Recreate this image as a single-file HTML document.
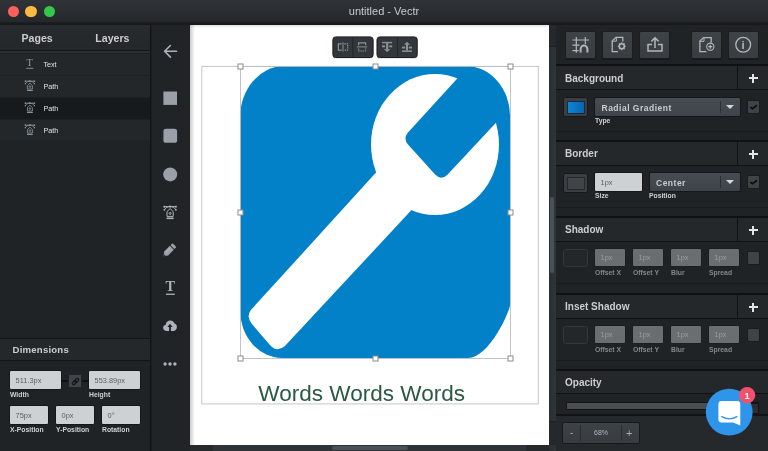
<!DOCTYPE html>
<html lang="en">
<head>
<meta charset="utf-8">
<title>untitled - Vectr</title>
<style>
*{box-sizing:border-box;margin:0;padding:0}
html,body{width:768px;height:451px;overflow:hidden;background:#1f2326;font-family:"Liberation Sans",sans-serif;}
#app{position:relative;width:768px;height:451px;overflow:hidden;will-change:transform}
.abs{position:absolute}
/* title bar */
#titlebar{left:0;top:0;width:768px;height:25px;z-index:5;background:linear-gradient(#303438,#25282b 21.8px,#1a1c1e 22.6px,#17191b 25px);}
#titlebar .t{position:absolute;left:0;width:768px;top:5px;text-align:center;font-size:11px;line-height:13px;color:#c9c9c9;}
.tl{position:absolute;top:5.8px;width:11.4px;height:11.4px;border-radius:50%}
/* left panel */
#left{left:0;top:24px;width:150px;height:427px;background:#1f2326}
#lhead{left:0;top:0;width:150px;height:26.4px;background:linear-gradient(#272b2e,#24282b)}
.htxt{position:absolute;font-weight:bold;font-size:10px;letter-spacing:0;color:#cdcdcd;line-height:12px;white-space:nowrap}
.row{position:absolute;left:0;width:150px;height:22px;background:#23272a;border-top:1px solid #1d2023}
.row .lbl{position:absolute;left:43.4px;top:6px;font-size:7.2px;line-height:9px;color:#e2e2e2}
.row svg{position:absolute;left:22px;top:3px}
.row.sel{background:#171a1c}
.inp{position:absolute;height:19px;background:#cdd1d4;border:1px solid #15181a;border-radius:2px;font-size:7.4px;line-height:19px;color:#5b5f64;padding-left:5.6px;white-space:nowrap}
.inp.dis{background:#6b6e71;color:#9a9da0;border-color:#1c1f21;line-height:17px}
.sl{position:absolute;font-size:6.8px;font-weight:bold;letter-spacing:0;color:#d0d0d0;line-height:8px;white-space:nowrap}
.sl.dim{color:#84888c}
/* tool strip */
#tools{left:150px;top:24px;width:40px;height:427px;background:#202427;border-left:1px solid #111315;box-shadow:inset 1px 0 0 #1b1e20}
/* canvas */
#canvas{left:190px;top:24px;width:359px;height:421px;background:#fff}
/* right */
#right{left:555px;top:24px;width:213px;height:427px;background:#1f2326}
#right:after{content:"";position:absolute;left:0;top:0;width:1px;height:427px;background:#131517}
.sec{position:absolute;left:0;width:213px;height:26px;background:#24282b;border-top:2px solid #0f1112;border-bottom:1px solid #0f1112}
.sec .htxt{left:10px;top:7px}
.sec .plus{position:absolute;left:182px;top:0;width:31px;height:23px;border-left:1px solid #0f1112}
.sec .plus:before{content:"";position:absolute;left:10.6px;top:11.2px;width:9.4px;height:2px;background:#e4e4e4}
.sec .plus:after{content:"";position:absolute;left:14.3px;top:7.5px;width:2px;height:9.4px;background:#e4e4e4}
.sub{position:absolute;left:0;width:213px;height:1px;background:#191c1e}
.sw{position:absolute;left:8px;width:25px;height:20px;background:#3a3f43;border:1px solid #15181a;border-radius:2.5px}
.sw i{position:absolute;left:3px;top:2.5px;right:2.5px;bottom:2.5px;background:#40454a;border:1px solid #26292c}
.dd{position:absolute;height:20px;background:linear-gradient(#464c51,#3e4449);border:1px solid #15181a;border-radius:2px;font-weight:bold;font-size:8.5px;letter-spacing:.5px;color:#c9ccce;line-height:19px;padding-top:1px;padding-left:6.5px;white-space:nowrap}
.dd:before{content:"";position:absolute;right:19px;top:3px;width:1px;height:12px;background:#2d3033}
.dd:after{content:"";position:absolute;right:6px;top:7px;border:4px solid transparent;border-top:4px solid #d5d7d9;border-bottom:0}
.cb{position:absolute;left:192px;width:13px;height:14px;background:#3f4347;border:1px solid #191c1e;border-radius:2px}
.cb svg{position:absolute;left:-1px;top:-1px}
.sw.dk{background:#24272a;border-color:#33373a;height:18px}
.tb{position:absolute;top:7px;width:31px;height:28px;background:linear-gradient(#3e4347,#393d41);border:1px solid #1b1d1f;border-radius:2px;box-shadow:0 1px 0 #17191b}
</style>
</head>
<body>
<div id="app">

<!-- TITLE BAR -->
<div id="titlebar" class="abs">
  <span class="tl" style="left:7.5px;background:#fc605c"></span>
  <span class="tl" style="left:25.3px;background:#fdbc40"></span>
  <span class="tl" style="left:43.8px;background:#34c84a"></span>
  <div class="t">untitled - Vectr</div>
</div>

<!-- LEFT PANEL -->
<div id="left" class="abs">
  <div id="lhead" class="abs">
    <span class="htxt" style="left:21.5px;top:8px;font-size:10.6px;line-height:13px">Pages</span>
    <span class="htxt" style="left:95.3px;top:8px;font-size:10.6px;line-height:13px">Layers</span>
  </div>
  <div class="abs" style="left:0;top:26.4px;width:150px;height:3px;background:linear-gradient(#131517 1.2px,#2a2f32 1.4px)"></div>
  <div class="row" style="top:29px"><svg width="16" height="16" viewBox="22 57 16 16"><g fill="none" stroke="#8c99a4" stroke-width=".9"><path d="M26.3 68.3H33.3"/><text x="29.8" y="65.9" text-anchor="middle" font-family="'Liberation Serif',serif" font-size="10.4" fill="#8c99a4" stroke="none">T</text></g></svg><span class="lbl">Text</span></div>
  <div class="row" style="top:51px"><svg width="16" height="16" viewBox="22 79 16 16"><g fill="none" stroke="#8c99a4" stroke-width=".8"><path d="M25.6 81.2H34.2M25.4 83.6C26.6 81.8 28.2 81.2 29.9 81.2C31.6 81.2 33.2 81.8 34.4 83.6"/><path d="M29.9 83.2L32.4 85.6V89H27.4V85.6Z"/><path d="M27 90.4H32.8" stroke-width="1.1"/><circle cx="29.9" cy="86.6" r=".8"/></g><g fill="#8c99a4"><rect x="24.7" y="80.5" width="1.4" height="1.4"/><rect x="33.7" y="80.5" width="1.4" height="1.4"/><rect x="29.2" y="80.4" width="1.4" height="1.4"/><rect x="24.8" y="83.1" width="1.2" height="1.2"/><rect x="33.8" y="83.1" width="1.2" height="1.2"/></g></svg><span class="lbl">Path</span></div>
  <div class="row sel" style="top:73px"><svg width="16" height="16" viewBox="22 79 16 16"><g fill="none" stroke="#8c99a4" stroke-width=".8"><path d="M25.6 81.2H34.2M25.4 83.6C26.6 81.8 28.2 81.2 29.9 81.2C31.6 81.2 33.2 81.8 34.4 83.6"/><path d="M29.9 83.2L32.4 85.6V89H27.4V85.6Z"/><path d="M27 90.4H32.8" stroke-width="1.1"/><circle cx="29.9" cy="86.6" r=".8"/></g><g fill="#8c99a4"><rect x="24.7" y="80.5" width="1.4" height="1.4"/><rect x="33.7" y="80.5" width="1.4" height="1.4"/><rect x="29.2" y="80.4" width="1.4" height="1.4"/><rect x="24.8" y="83.1" width="1.2" height="1.2"/><rect x="33.8" y="83.1" width="1.2" height="1.2"/></g></svg><span class="lbl">Path</span></div>
  <div class="row" style="top:95px;height:21px"><svg width="16" height="16" viewBox="22 79 16 16"><g fill="none" stroke="#8c99a4" stroke-width=".8"><path d="M25.6 81.2H34.2M25.4 83.6C26.6 81.8 28.2 81.2 29.9 81.2C31.6 81.2 33.2 81.8 34.4 83.6"/><path d="M29.9 83.2L32.4 85.6V89H27.4V85.6Z"/><path d="M27 90.4H32.8" stroke-width="1.1"/><circle cx="29.9" cy="86.6" r=".8"/></g><g fill="#8c99a4"><rect x="24.7" y="80.5" width="1.4" height="1.4"/><rect x="33.7" y="80.5" width="1.4" height="1.4"/><rect x="29.2" y="80.4" width="1.4" height="1.4"/><rect x="24.8" y="83.1" width="1.2" height="1.2"/><rect x="33.8" y="83.1" width="1.2" height="1.2"/></g></svg><span class="lbl">Path</span></div>

  <div class="abs" style="left:0;top:314px;width:150px;height:23px;background:#24282b;border-top:1px solid #121416;border-bottom:1px solid #121416">
    <span class="htxt" style="left:12.6px;top:5px;font-size:9.6px;letter-spacing:.2px">Dimensions</span>
  </div>
  <div class="inp" style="left:9px;top:346px;width:53px;height:20px">511.3px</div>
  <div class="inp" style="left:88px;top:346px;width:53px;height:20px">553.89px</div>
  <div class="abs" style="left:61px;top:356.4px;width:28px;height:1.6px;background:#0e1011"></div>
  <div class="abs" style="left:68px;top:350px;width:14px;height:14px;background:#3f454a;border:1px solid #1f2326;border-radius:1.5px"><svg class="abs" style="left:-.5px;top:-.5px" width="13" height="13" viewBox="0 0 13 13"><g fill="none" stroke="#121416" stroke-width="1.1" transform="rotate(-45 6.5 6.5)"><rect x="2.6" y="5.1" width="4.6" height="2.8" rx="1.4"/><rect x="5.8" y="5.1" width="4.6" height="2.8" rx="1.4"/></g></svg></div>
  <span class="sl" style="left:10px;top:367px">Width</span>
  <span class="sl" style="left:89px;top:367px">Height</span>
  <div class="inp" style="left:9px;top:381px;width:40px;height:20px">75px</div>
  <div class="inp" style="left:55px;top:381px;width:40px;height:20px">0px</div>
  <div class="inp" style="left:101px;top:381px;width:40px;height:20px">0°</div>
  <span class="sl" style="left:10px;top:402px">X-Position</span>
  <span class="sl" style="left:56px;top:402px">Y-Position</span>
  <span class="sl" style="left:102px;top:402px">Rotation</span>
</div>

<!-- TOOL STRIP -->
<div id="tools" class="abs">
  <svg class="abs" style="left:-1px;top:0" width="40" height="427" viewBox="150 24 40 427">
    <g fill="none" stroke="#aeb3bb" stroke-width="1.6" stroke-linecap="round" stroke-linejoin="round">
      <path d="M176.5 51.3H164.6M170.4 45.5L164.6 51.3L170.4 57.1"/>
    </g>
    <rect x="163.4" y="91.5" width="13.6" height="13.4" fill="#9a9fa8"/>
    <rect x="163.4" y="128.8" width="13.7" height="14" rx="2.6" fill="#9a9fa8"/>
    <circle cx="170.2" cy="174.4" r="7" fill="#9a9fa8"/>
    <!-- pen tool -->
    <g fill="none" stroke="#aeb3bb" stroke-width="1">
      <path d="M164.5 206.6H175.7M164.5 209.6C166 207.2 168 206.6 170.1 206.6C172.2 206.6 174.2 207.2 175.7 209.6"/>
      <path d="M170.1 208.6L173.2 211.6V216.4H167V211.6Z"/>
      <path d="M166.6 218.3H173.6" stroke-width="1.6"/>
      <circle cx="170.1" cy="213.4" r="1"/>
    </g>
    <g fill="#aeb3bb"><rect x="163.4" y="205.8" width="1.8" height="1.8"/><rect x="175" y="205.8" width="1.8" height="1.8"/><rect x="169.2" y="205.6" width="1.9" height="1.9"/><rect x="163.6" y="209" width="1.6" height="1.6"/><rect x="175" y="209" width="1.6" height="1.6"/></g>
    <!-- pencil -->
    <g transform="translate(169.4 250.2) rotate(-45)">
      <path d="M-8.4 0L-4.6 -2.8H3.4V2.8H-4.6Z" fill="#9a9fa8"/>
      <rect x="4.3" y="-2.8" width="2.9" height="5.6" rx=".9" fill="#9a9fa8"/>
      <path d="M-8.4 0L-6.6 -1.35V1.35Z" fill="#2a2e31"/>
      <path d="M-3.6 -.9H2.6" stroke="#c3c7cd" stroke-width=".7"/>
    </g>
    <!-- T -->
    <g fill="#aeb3bb">
      <text x="170.35" y="291" text-anchor="middle" font-family="'Liberation Serif',serif" font-weight="bold" font-size="14.2">T</text>
      <rect x="166" y="293.6" width="8.8" height="1.3"/>
    </g>
    <!-- cloud -->
    <path d="M166.6 331C164.6 331 163.1 329.6 163.1 327.8C163.1 326.2 164.2 325 165.7 324.7C165.9 322.4 167.8 320.6 170.2 320.6C172.2 320.6 173.9 321.8 174.5 323.6C176 323.9 176.9 325.4 176.9 327C176.9 329.2 175.3 331 173.2 331Z" fill="#aeb3bb"/>
    <path d="M170 323.8L172.6 327H170.9V331.4H169.1V327H167.4Z" fill="#1f2326"/>
    <circle cx="165.1" cy="364" r="1.7" fill="#aeb3bb"/><circle cx="170" cy="364" r="1.7" fill="#aeb3bb"/><circle cx="174.9" cy="364" r="1.7" fill="#aeb3bb"/>
  </svg>
</div>

<!-- CANVAS -->
<div id="canvas" class="abs">
  <svg class="abs" style="left:0;top:0" width="359" height="421" viewBox="190 24 359 421">
    <defs>
      <linearGradient id="shl" x1="0" x2="1" y1="0" y2="0"><stop offset="0" stop-color="#000" stop-opacity=".2"/><stop offset="1" stop-color="#000" stop-opacity="0"/></linearGradient>
      <linearGradient id="sht" x1="0" x2="0" y1="0" y2="1"><stop offset="0" stop-color="#000" stop-opacity=".12"/><stop offset="1" stop-color="#000" stop-opacity="0"/></linearGradient>
    </defs>
    <rect x="190" y="24" width="359" height="421" fill="#fff"/>
    <!-- artboard -->
    <rect x="201.8" y="66.4" width="336.5" height="337.5" fill="#fff" stroke="#c6c6c6" stroke-width="1"/>
    <!-- blue shape -->
    <path d="M284 66H466A44 50 0 0 1 510 116V305C510 311 489 358 468 358H282A42 48 0 0 1 240 310V118A44 52 0 0 1 284 66Z" fill="#0280c8"/>
    <!-- wrench -->
    <mask id="wm" maskUnits="userSpaceOnUse" x="190" y="24" width="359" height="421">
      <ellipse cx="435" cy="144.5" rx="64" ry="70.5" fill="#fff"/>
      <path d="M376.9 171.6L250.9 310Q245.9 317 251.9 324L269.9 345Q276.9 353 284.9 346L412.9 208.6Z" fill="#fff"/>
      <path d="M460 75.4L408 132.4Q403 138.4 408 144.4L435.4 174.8Q441.4 180.8 447.4 174.8L501.6 116.8L521 60Z" fill="#000"/>
    </mask>
    <rect x="240" y="66" width="270" height="292" fill="#fff" mask="url(#wm)"/>
    <!-- selection -->
    <rect x="240.5" y="66.5" width="270" height="292" fill="none" stroke="#bdbdbd" stroke-width=".9"/>
    <g fill="#fff" stroke="#8c8c8c" stroke-width="1">
      <rect x="238" y="64" width="5" height="5"/><rect x="373" y="64" width="5" height="5"/><rect x="508" y="64" width="5" height="5"/>
      <rect x="238" y="210" width="5" height="5"/><rect x="508" y="210" width="5" height="5"/>
      <rect x="238" y="356" width="5" height="5"/><rect x="373" y="356" width="5" height="5"/><rect x="508" y="356" width="5" height="5"/>
    </g>
    <text x="258.3" y="400.8" font-family="'Liberation Sans',sans-serif" font-size="22" fill="#2a5a46" textLength="206.8" lengthAdjust="spacingAndGlyphs">Words Words Words</text>
    <!-- floating toolbars -->
    <g>
      <rect x="332.6" y="37.2" width="41" height="21.4" rx="3.2" fill="#000" opacity=".18"/>
      <rect x="376.7" y="37.2" width="41" height="21.4" rx="3.2" fill="#000" opacity=".18"/>
      <rect x="332.9" y="36.9" width="40.2" height="20.6" rx="2.8" fill="#33373b" stroke="#1c1e20" stroke-width="1"/>
      <rect x="377" y="36.9" width="40.2" height="20.6" rx="2.8" fill="#33373b" stroke="#1c1e20" stroke-width="1"/>
      <path d="M352.8 37.4V57M397.5 37.4V57" stroke="#24272a" stroke-width="1"/>
      <g fill="none" stroke="#8d9299" stroke-width="1.2">
        <path d="M341.6 43.8H338.4V50.2H341.6"/>
        <path d="M343 42.3V51.6" stroke-width="1"/>
        <path d="M344.4 43.8H347.6V50.2H344.4" stroke-dasharray="1.4 .8"/>
        <path d="M358.6 45.2V42.9H365.6V45.2"/>
        <path d="M357 46.9H367.2" stroke-width="1"/>
        <path d="M358.6 48.4V51H365.6V48.4" stroke-dasharray="1.4 .8"/>
      </g>
      <g fill="#8d9299">
        <rect x="382" y="41.9" width="10.1" height="1.4"/>
        <rect x="386.1" y="43" width="2.1" height="6.6"/>
        <path d="M383.7 49.2H390.5L387.1 52Z"/>
        <rect x="382" y="45.4" width="3" height="1.9"/><rect x="389.3" y="45.4" width="2.9" height="1.9"/>
        <rect x="402" y="50.4" width="10" height="1.5"/>
        <rect x="406" y="44.2" width="2" height="6.4"/>
        <path d="M403.9 44.7H410.1L407 41.8Z"/>
        <rect x="402" y="46.6" width="3.2" height="1.9"/><rect x="408.8" y="46.6" width="3.2" height="1.9"/>
      </g>
    </g>
    <rect x="190" y="24" width="5" height="421" fill="url(#shl)"/>
    <rect x="190" y="25" width="359" height="3" fill="url(#sht)"/>
  </svg>
</div>

<!-- RIGHT PANEL -->
<div id="right" class="abs">
  <div class="tb" style="left:10px"></div>
  <div class="tb" style="left:47px"></div>
  <div class="tb" style="left:84px"></div>
  <div class="tb" style="left:135.5px"></div>
  <div class="tb" style="left:172.8px"></div>
  <svg class="abs" style="left:0;top:0" width="213" height="42" viewBox="555 24 213 42">
    <g fill="none" stroke="#b3b7bd" stroke-width="1.3">
      <!-- grid + magnet -->
      <path d="M576.3 37V52.8M585.3 37V44M572.5 40H589M572.5 45.2H579.5M572.5 50.6H578.6" stroke-width="1.2"/>
      <path d="M580.6 52.4V49.2A3.4 3.6 0 0 1 587.4 49.2V52.4" stroke-width="2"/>
      <!-- doc + gear -->
      <path d="M618 51.6H612.2V41L616 37.4H622.8V41.4"/>
      <path d="M616.4 37.8V41.2H612.6" stroke-width="1"/>
      <circle cx="621.8" cy="46.3" r="2.5" stroke-width="1.5"/>
      <path d="M621.8 42.3V50.3M617.8 46.3H625.8M619 43.5L624.6 49.1M624.6 43.5L619 49.1" stroke-width="1.1" stroke-dasharray="1.2 5.6"/>
      <!-- share -->
      <path d="M652 44.6H648V51H662V44.6H658" stroke-width="1.5"/>
      <path d="M655 48V38.2M651.4 41.4L655 37.8L658.6 41.4" stroke-width="1.5"/>
      <!-- doc + plus -->
      <path d="M706.4 51.7H699.9V41L703.6 37.6H711.2V42.4"/>
      <path d="M704 38V41.4H700.2" stroke-width="1"/>
      <circle cx="710.3" cy="46.7" r="3.6" stroke-width="1.1"/>
      <path d="M710.3 44.7V48.7M708.3 46.7H712.3" stroke-width="1.3"/>
      <!-- info -->
      <circle cx="743.2" cy="44.7" r="7.4" stroke-width="1.3"/>
      <text x="743.2" y="49" text-anchor="middle" font-family="'Liberation Sans',sans-serif" font-size="11.4" font-weight="bold" fill="#b3b7bd" stroke="none">i</text>
    </g>
  </svg>

  <div class="sec" style="top:40px"><span class="htxt">Background</span><span class="plus"></span></div>
  <div class="sw" style="top:73px"><i style="background:linear-gradient(90deg,#0b86d6,#0565b0);border-color:#1b2a38"></i></div>
  <div class="dd" style="left:39px;top:73px;width:147px">Radial Gradient</div>
  <div class="cb on" style="top:76px"><svg width="13" height="14" viewBox="0 0 13 14"><path d="M3.3 7.1L5.5 8.7L10 5.3" fill="none" stroke="#0b0c0d" stroke-width="1.7"/></svg></div>
  <span class="sl" style="left:40px;top:93px">Type</span>
  <div class="sub" style="top:107px"></div>

  <div class="sec" style="top:116px"><span class="htxt" style="top:6px">Border</span><span class="plus"></span></div>
  <div class="sw" style="top:149px"><i></i></div>
  <div class="inp" style="left:39px;top:148px;width:49px;height:20px">1px</div>
  <div class="dd" style="left:93.5px;top:148px;width:92.5px">Center</div>
  <div class="cb on" style="top:151px"><svg width="13" height="14" viewBox="0 0 13 14"><path d="M3.3 7.1L5.5 8.7L10 5.3" fill="none" stroke="#0b0c0d" stroke-width="1.7"/></svg></div>
  <span class="sl" style="left:40px;top:168px">Size</span>
  <span class="sl" style="left:94px;top:168px">Position</span>
  <div class="sub" style="top:183px"></div>

  <div class="sec" style="top:192px"><span class="htxt" style="top:6px">Shadow</span><span class="plus"></span></div>
  <div class="sw dk" style="top:225px"></div>
  <div class="inp dis" style="left:39px;top:224px;width:32px">1px</div>
  <div class="inp dis" style="left:77px;top:224px;width:32px">1px</div>
  <div class="inp dis" style="left:115px;top:224px;width:32px">1px</div>
  <div class="inp dis" style="left:153px;top:224px;width:32px">1px</div>
  <div class="cb" style="top:227px"></div>
  <span class="sl dim" style="left:40px;top:245px">Offset X</span>
  <span class="sl dim" style="left:78px;top:245px">Offset Y</span>
  <span class="sl dim" style="left:116px;top:245px">Blur</span>
  <span class="sl dim" style="left:154px;top:245px">Spread</span>
  <div class="sub" style="top:259px"></div>

  <div class="sec" style="top:269px"><span class="htxt" style="top:6px">Inset Shadow</span><span class="plus"></span></div>
  <div class="sw dk" style="top:302px"></div>
  <div class="inp dis" style="left:39px;top:301px;width:32px">1px</div>
  <div class="inp dis" style="left:77px;top:301px;width:32px">1px</div>
  <div class="inp dis" style="left:115px;top:301px;width:32px">1px</div>
  <div class="inp dis" style="left:153px;top:301px;width:32px">1px</div>
  <div class="cb" style="top:304px"></div>
  <span class="sl dim" style="left:40px;top:322px">Offset X</span>
  <span class="sl dim" style="left:78px;top:322px">Offset Y</span>
  <span class="sl dim" style="left:116px;top:322px">Blur</span>
  <span class="sl dim" style="left:154px;top:322px">Spread</span>
  <div class="sub" style="top:336px"></div>

  <div class="sec" style="top:345px;height:25px"><span class="htxt" style="top:6px">Opacity</span></div>
  <div class="abs" style="left:11px;top:378px;width:193px;height:8px;background:#4a4e52;border:1px solid #121416;border-radius:1px"></div>

  <div class="abs" style="left:0;top:390px;width:213px;height:37px;background:#25292c;border-top:2px solid #111315"></div>
  <div class="abs" style="left:7px;top:398px;width:78px;height:22px;background:linear-gradient(#3d4246,#383c40);border:1px solid #17191b;border-radius:2px">
    <span class="abs" style="left:17px;top:2px;width:1px;height:16px;background:#2a2d30"></span>
    <span class="abs" style="left:57.5px;top:2px;width:1px;height:16px;background:#2a2d30"></span>
    <span class="abs" style="left:7px;top:3px;font-size:10px;line-height:14px;color:#a9acaf">-</span>
    <span class="abs" style="left:18px;top:3px;width:40px;text-align:center;font-size:7px;line-height:14px;color:#b4b7ba">68%</span>
    <span class="abs" style="left:63px;top:2.5px;font-size:11px;line-height:14px;color:#a9acaf">+</span>
  </div>
</div>

<!-- scrollbars -->
<div class="abs" style="left:549px;top:24px;width:6.5px;height:427px;background:linear-gradient(90deg,#2a2e32,#30353a)"></div>
<div class="abs" style="left:549px;top:24px;width:6.5px;height:23px;background:#25292c;border-bottom:1px solid #1d2023"></div>
<div class="abs" style="left:549px;top:421px;width:6.5px;height:24px;background:#25292c;border-top:1px solid #1d2023"></div>
<div class="abs" style="left:550.2px;top:196.5px;width:3.6px;height:76px;background:#4b5158;border-radius:2px"></div>
<div class="abs" style="left:190px;top:445px;width:359px;height:6px;background:#2e3337"></div>
<div class="abs" style="left:190px;top:445px;width:22.5px;height:6px;background:#25292c"></div>
<div class="abs" style="left:525.5px;top:445px;width:23.5px;height:6px;background:#25292c"></div>
<div class="abs" style="left:332px;top:446.3px;width:75.5px;height:3.6px;background:#4b5158;border-radius:2px"></div>

<!-- chat -->
<div class="abs" style="left:751px;top:403px;width:8px;height:11px;background:#2b2f32;border:1px solid #111315;border-left:0"></div>
<svg class="abs" style="left:700px;top:384px" width="60" height="56" viewBox="700 384 60 56">
  <circle cx="729.2" cy="412.1" r="23.4" fill="#2e95ea"/>
  <path d="M721.4 401H737.4Q740.3 401 740.3 403.9V425.6L733 422.4H721.4Q718.4 422.4 718.4 419.5V403.9Q718.4 401 721.4 401Z" fill="#fff"/>
  <path d="M721.8 416.6Q729.4 421 737 416.6" fill="none" stroke="#2e95ea" stroke-width="1.3" stroke-linecap="round"/>
  <circle cx="747.1" cy="395.3" r="8.2" fill="#f3506d"/>
  <text x="747.1" y="398.8" text-anchor="middle" font-family="'Liberation Sans',sans-serif" font-weight="bold" font-size="9.5" fill="#fff">1</text>
</svg>

</div>
</body>
</html>
